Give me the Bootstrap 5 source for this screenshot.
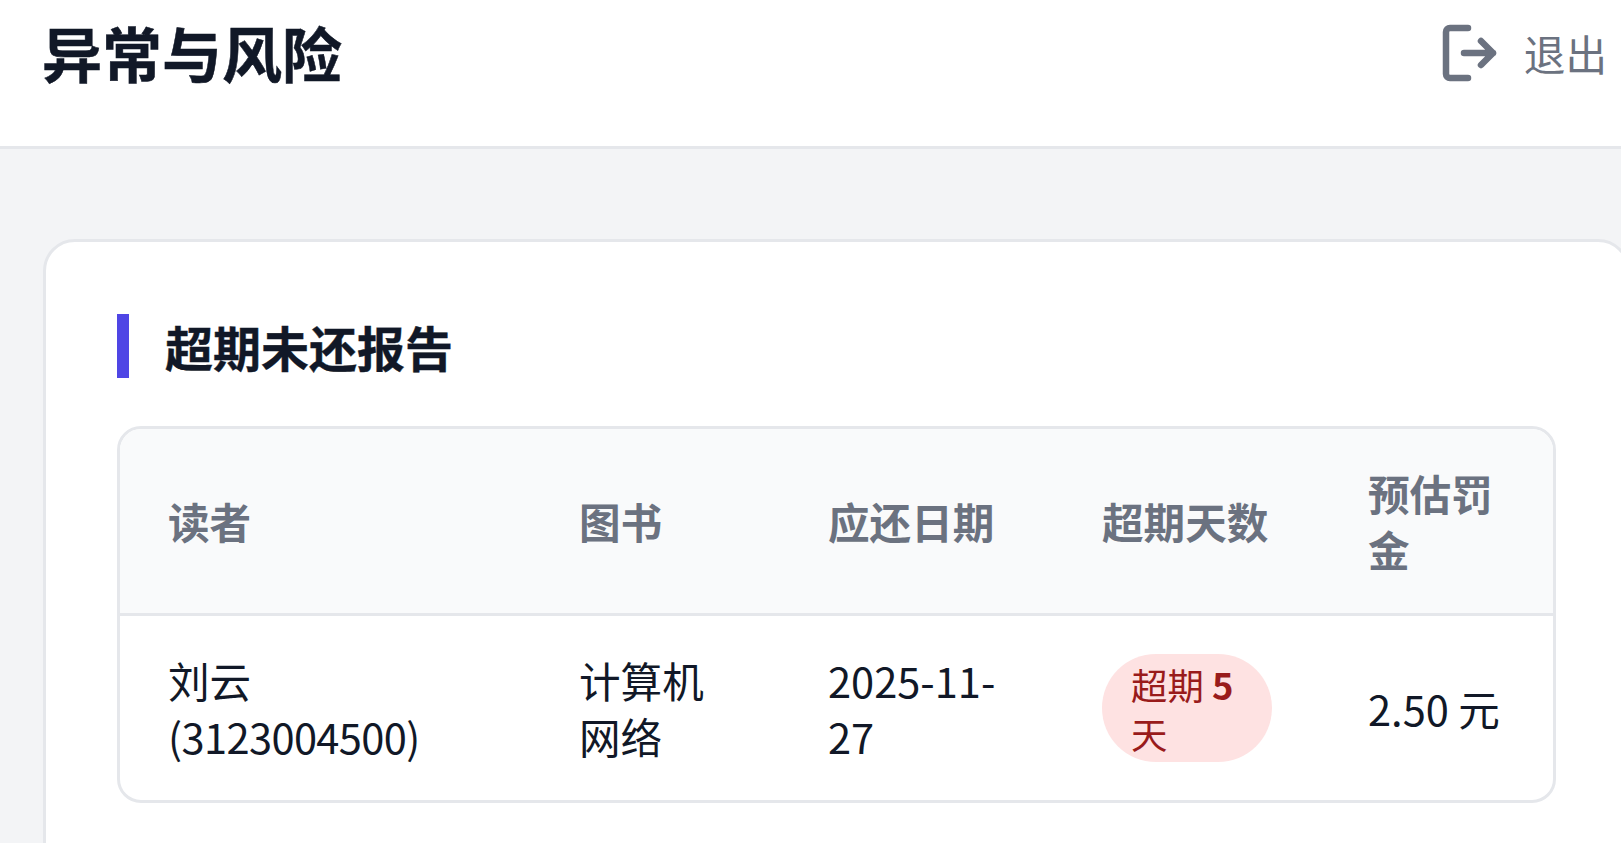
<!DOCTYPE html>
<html lang="zh">
<head>
    <meta charset="utf-8">
    <title>异常与风险</title>
    <link href="https://cdn.jsdelivr.net/npm/bootstrap@5.3.0/dist/css/bootstrap.min.css" rel="stylesheet">
    <style>
        html, body { height: 100%; overflow: hidden; }
        body {
            background: #f3f4f6;
            color: #111827;
            font-family: "Noto Sans CJK SC", "Noto Sans", sans-serif;
        }
        .top-head {
            height: 149px;
            background: #fff;
            border-bottom: 3px solid #e5e7eb;
            padding: 0 14px 40px 42px;
        }
        .top-title { font-size: 60px; font-weight: 700; line-height: 1; margin: 0 0 2px; color: #111827; -webkit-text-stroke: .5px #111827; }
        .exit-link { color: #6b7280; font-size: 41.6px; gap: 27px; text-decoration: none; }
        .page-main { width: 1629px; padding: 90px 0 0 43px; box-sizing: content-box; }
        .report-card {
            background: #fff;
            border: 3px solid #e5e7eb;
            border-radius: 32px;
            padding: 72px 71px;
            width: 1587px;
        }
        .report-title {
            border-left: 12px solid #4f46e5;
            padding-left: 36px;
            height: 64px;
            font-size: 48px;
            font-weight: 700;
            line-height: 64px;
            margin: 0 0 48px;
            -webkit-text-stroke: .4px #111827;
        }
        .report-wrap { border: 3px solid #e5e7eb; border-radius: 24px; overflow: hidden; }
        .report-table { table-layout: fixed; width: 100%; font-size: 41.6px; line-height: 56px; margin: 0; }
        .report-table th, .report-table td { padding: 36px 48px; vertical-align: middle; }
        .report-table th { background: #f9fafb; color: #6b7280; font-weight: 700; border-bottom: 3px solid #e5e7eb; }
        .report-table td { color: #111827; }
        .c1 { width: 411px; }
        .c2 { width: 249px; }
        .c3 { width: 274px; }
        .c4 { width: 266px; }
        .reader-id { letter-spacing: -.6px; }
        .overdue-pill {
            display: inline-block;
            background: #fee2e2;
            color: #991b1b;
            border-radius: 9999px;
            font-size: 36.4px;
            line-height: 49px;
            padding: 6px 29px 4px;
        }
        .overdue-pill b { font-weight: 700; }
    </style>
</head>
<body>
    <header class="top-head d-flex align-items-center justify-content-between">
        <h1 class="top-title">异常与风险</h1>
        <a class="exit-link d-flex align-items-center" href="#">
            <svg width="56" height="58" viewBox="0 0 56 58" fill="none" stroke="#6b7280" stroke-width="6.5" stroke-linecap="round" stroke-linejoin="round">
                <path d="M27 4H9a4 4 0 0 0-4 4v42a4 4 0 0 0 4 4h18"/>
                <path d="M23 29h29M40 17l12 12-12 12"/>
            </svg>
            <span>退出</span>
        </a>
    </header>
    <main class="page-main">
        <section class="report-card">
            <h2 class="report-title">超期未还报告</h2>
            <div class="report-wrap">
                <table class="report-table">
                    <thead>
                        <tr>
                            <th class="c1">读者</th>
                            <th class="c2">图书</th>
                            <th class="c3">应还日期</th>
                            <th class="c4">超期天数</th>
                            <th>预估罚金</th>
                        </tr>
                    </thead>
                    <tbody>
                        <tr>
                            <td>刘云 <span class="reader-id">(3123004500)</span></td>
                            <td>计算机网络</td>
                            <td>2025-11-27</td>
                            <td><span class="overdue-pill">超期 <b>5</b> 天</span></td>
                            <td>2.50 元</td>
                        </tr>
                    </tbody>
                </table>
            </div>
        </section>
    </main>
    <script src="https://cdn.jsdelivr.net/npm/bootstrap@5.3.0/dist/js/bootstrap.bundle.min.js"></script>
</body>
</html>
